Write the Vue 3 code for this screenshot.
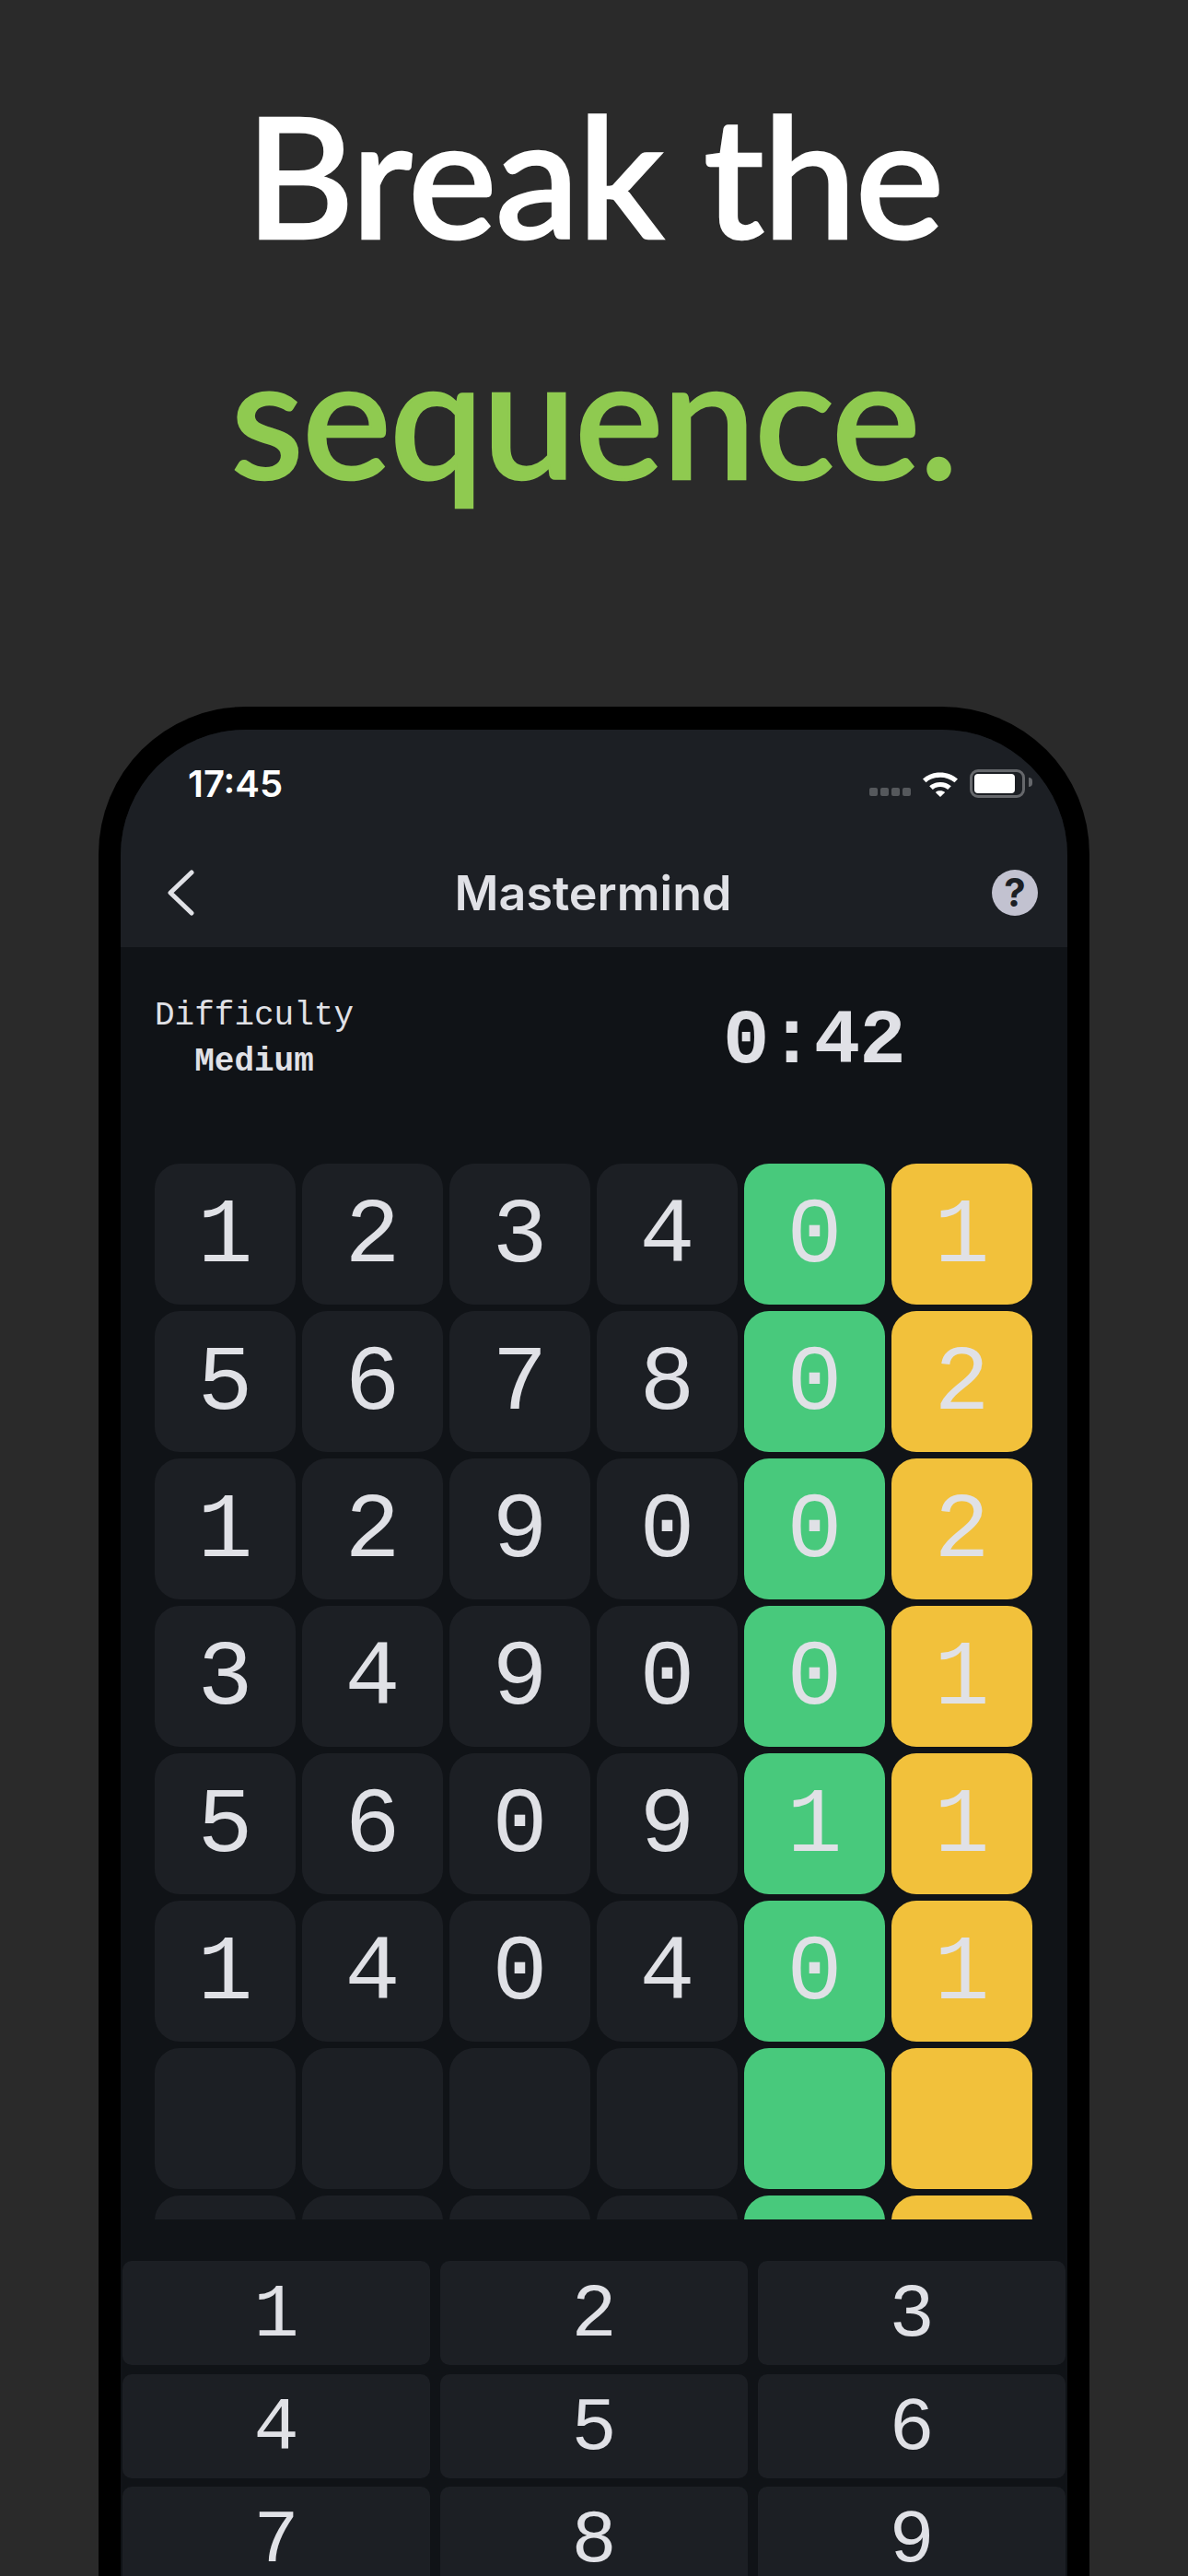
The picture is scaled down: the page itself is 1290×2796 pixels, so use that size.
<template>
  <div class="page">
    <h1 class="headline">
      <span>Break the</span>
      <span class="accent">sequence.</span>
    </h1>

    <div class="phone">
      <div class="screen">
        <header class="top">
          <div class="status">
            <span class="clock">17:45</span>
            <div class="status-icons">
              <div class="signal">
                <i v-for="n in 4" :key="n"></i>
              </div>
              <svg class="wifi" width="40" height="30" viewBox="0 0 40 30">
                <path d="M1 10.5C11.5 1 28.500 1 39 10.500L35.500 14.300C27 6.800 13 6.800 4.500 14.300Z" fill="#fff" />
                <path d="M8.200 18.300C14.500 12.500 25.500 12.500 31.800 18.300L28.200 22C23.500 18 16.500 18 11.800 22Z" fill="#fff" />
                <path d="M14.800 25C17.500 22.800 22.500 22.800 25.200 25L20 30Z" fill="#fff" />
              </svg>
              <div class="battery"><div class="battery-fill"></div></div>
            </div>
          </div>
          <nav class="nav">
            <svg class="back" width="30" height="50" viewBox="0 0 30 50">
              <path d="M27 3L4 25L27 47" fill="none" stroke="#e0e1e6" stroke-width="5" stroke-linecap="round" stroke-linejoin="round" />
            </svg>
            <span class="title">Mastermind</span>
            <span class="help">?</span>
          </nav>
        </header>

        <main class="game">
          <div class="info">
            <div class="difficulty">
              <div>Difficulty</div>
              <div class="level">Medium</div>
            </div>
            <div class="timer">0:42</div>
          </div>

          <div class="board">
            <div v-for="(row, r) in rows" :key="r" class="row">
              <div v-for="(d, i) in row.guess" :key="i" class="cell">{{ d }}</div>
              <div class="cell exact">{{ row.exact }}</div>
              <div class="cell partial">{{ row.partial }}</div>
            </div>
          </div>

          <div class="keypad">
            <button v-for="k in keys" :key="k" class="key">{{ k }}</button>
          </div>
        </main>
      </div>
    </div>
  </div>
</template>

<script setup>
const blank = { guess: ["", "", "", ""], exact: "", partial: "" };

const rows = [
  { guess: [1, 2, 3, 4], exact: 0, partial: 1 },
  { guess: [5, 6, 7, 8], exact: 0, partial: 2 },
  { guess: [1, 2, 9, 0], exact: 0, partial: 2 },
  { guess: [3, 4, 9, 0], exact: 0, partial: 1 },
  { guess: [5, 6, 0, 9], exact: 1, partial: 1 },
  { guess: [1, 4, 0, 4], exact: 0, partial: 1 },
  blank,
  blank,
];

const keys = [1, 2, 3, 4, 5, 6, 7, 8, 9];
</script>

<style>
html,
body {
  margin: 0;
  background: #2a2a2a;
}
</style>

<style scoped>
.page {
  width: 1290px;
  height: 2796px;
  overflow: hidden;
  background: #2a2a2a;
  font-family: "Inter", sans-serif;
}

.headline {
  margin: 0;
  padding-top: 58px;
  height: 767px;
  box-sizing: border-box;
  font-family: "Lato", sans-serif;
  font-size: 182px;
  font-weight: 500;
  -webkit-text-stroke: 2.5px currentColor;
  letter-spacing: -1.5px;
  line-height: 261px;
  text-align: center;
  color: #fff;
}

.headline span {
  display: block;
}

.accent {
  color: #8fca50;
}

.phone {
  width: 1076px;
  margin: 0 auto;
  height: 2100px;
  box-sizing: border-box;
  background: #000;
  border-radius: 160px 160px 0 0;
  padding: 25px 24px 0;
}

.screen {
  height: 100%;
  background: #101317;
  border-radius: 136px 136px 0 0;
  overflow: hidden;
}

.top {
  height: 236px;
  box-sizing: border-box;
  background: #1c1f24;
  padding: 35px 46px 0 73px;
}

.status {
  display: flex;
  justify-content: space-between;
  align-items: center;
  height: 46px;
}

.clock {
  font-size: 40px;
  font-weight: 600;
  color: #fff;
}

.status-icons {
  display: flex;
  align-items: center;
  gap: 12px;
}

.signal {
  display: flex;
  gap: 3px;
  margin-top: 18px;
}

.signal i {
  width: 9px;
  height: 9px;
  border-radius: 2px;
  background: #55585c;
}

.battery {
  position: relative;
  width: 60px;
  height: 31px;
  box-sizing: border-box;
  border: 3px solid #66686c;
  border-radius: 9px;
  padding: 2px;
}

.battery::after {
  content: "";
  position: absolute;
  right: -11px;
  top: 6px;
  width: 4px;
  height: 10px;
  background: #66686c;
  border-radius: 0 4px 4px 0;
}

.battery-fill {
  width: 44px;
  height: 100%;
  background: #fff;
  border-radius: 4px;
}

.nav {
  display: flex;
  justify-content: space-between;
  align-items: center;
  margin: 71px -14px 0 -23px;
  height: 50px;
}

.title {
  font-size: 52px;
  font-weight: 600;
  color: #e0e1e6;
}

.help {
  width: 50px;
  height: 50px;
  border-radius: 50%;
  background: #c2c2d0;
  color: #1c1f24;
  font-size: 42px;
  font-weight: 700;
  line-height: 50px;
  text-align: center;
}

.game {
  font-family: "Liberation Mono", monospace;
  color: #e0e1e6;
}

.info {
  display: flex;
  height: 235px;
  box-sizing: border-box;
  padding: 50px 0 0 37px;
}

.difficulty {
  font-size: 36px;
  line-height: 50px;
  text-align: center;
}

.level {
  font-weight: 700;
}

.timer {
  margin: 3px 0 0 401px;
  font-size: 84px;
  font-weight: 700;
  letter-spacing: -1px;
  line-height: 100px;
}

.board {
  height: 1146px;
  padding: 0 37px;
  overflow: hidden;
}

.row {
  display: grid;
  grid-template-columns: repeat(6, 153px);
  gap: 7px;
  margin-bottom: 7px;
}

.cell {
  height: 153px;
  border-radius: 27px;
  background: #1c1f24;
  font-size: 100px;
  line-height: 160px;
  text-align: center;
}

.exact {
  background: #48c97c;
}

.partial {
  background: #f2c13b;
}

.keypad {
  display: grid;
  grid-template-columns: repeat(3, 334px);
  column-gap: 11px;
  row-gap: 9.500px;
  margin-top: 45px;
  padding: 0 2px;
}

.key {
  height: 113px;
  border: 0;
  padding: 6px 0 0;
  border-radius: 10px;
  background: #1c1f24;
  color: #e0e1e6;
  font-family: inherit;
  font-size: 82px;
  line-height: 107px;
}
</style>
